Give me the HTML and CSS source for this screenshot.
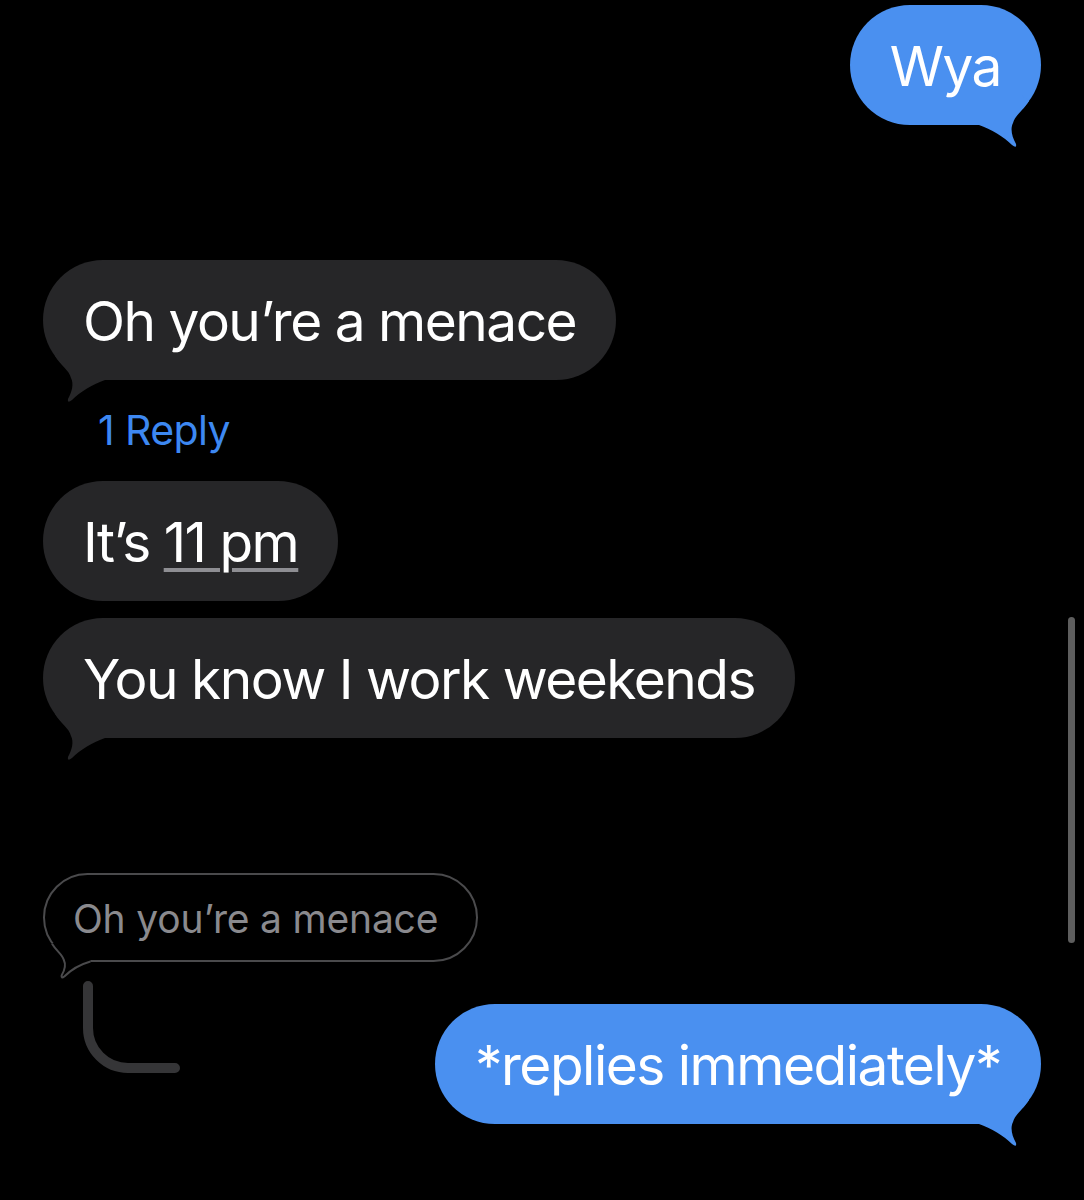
FILE: index.html
```html
<!DOCTYPE html>
<html lang="en">
<head>
<meta charset="utf-8">
<title>Messages</title>
<link rel="stylesheet" href="styles.css">
</head>
<body>
<div class="thread">
  <div class="row row-right">
    <div class="bubble sent"><span class="text">Wya</span><svg class="tail tail-right" viewBox="0 0 70 65"><path d="M0 10 L50 10 L58 16 C52 26 44 30 42 38 C39 44 41 52 45 59 Q46 64 41 60 C33 52 20 44 8 40 L0 40 Z"/></svg></div>
  </div>

  <div class="row row-left gap-xl">
    <div class="bubble recv"><span class="text">Oh you’re a menace</span><svg class="tail tail-left" viewBox="0 0 70 65"><path d="M0 10 L50 10 L58 16 C52 26 44 30 42 38 C39 44 41 52 45 59 Q46 64 41 60 C33 52 20 44 8 40 L0 40 Z"/></svg></div>
  </div>

  <div class="reply-count">1 Reply</div>

  <div class="row row-left">
    <div class="bubble recv"><span class="text">It’s <span class="detected">11 pm</span></span></div>
  </div>

  <div class="row row-left gap-sm">
    <div class="bubble recv"><span class="text">You know I work weekends</span><svg class="tail tail-left" viewBox="0 0 70 65"><path d="M0 10 L50 10 L58 16 C52 26 44 30 42 38 C39 44 41 52 45 59 Q46 64 41 60 C33 52 20 44 8 40 L0 40 Z"/></svg></div>
  </div>

  <div class="row row-left gap-xl">
    <div class="quoted"><span class="text">Oh you’re a menace</span><svg class="qtail" viewBox="0 0 70 65"><path class="qfill" d="M6 28 L50 10 L58 16 C52 26 44 30 42 38 C39 44 41 52 45 59 Q46 64 41 60 C33 52 20 44 6 40 Z"/><path class="qstroke" d="M58 16 C52 26 44 30 42 38 C39 44 41 52 45 59 Q46 64 41 60 C33 52 20 44 6 40"/></svg></div>
  </div>

  <div class="row row-split">
    <svg class="connector" viewBox="0 0 140 100"><path d="M45 10 V52 A40 40 0 0 0 85 92 H132"/></svg>
    <div class="bubble sent late"><span class="text">*replies immediately*</span><svg class="tail tail-right" viewBox="0 0 70 65"><path d="M0 10 L50 10 L58 16 C52 26 44 30 42 38 C39 44 41 52 45 59 Q46 64 41 60 C33 52 20 44 8 40 L0 40 Z"/></svg></div>
  </div>
</div>
<div class="scrollbar"></div>
</body>
</html>
```

FILE: styles.css
```css
html, body {
  margin: 0;
  padding: 0;
  background: #000;
}

body {
  width: 1084px;
  height: 1200px;
  overflow: hidden;
  position: relative;
  font-family: "Inter", "Noto Sans", sans-serif;
  color: #fff;
}

.thread {
  display: flex;
  flex-direction: column;
  padding: 5px 43px 0 43px;
}

.row {
  display: flex;
}

.row-right {
  justify-content: flex-end;
}

.row-left {
  justify-content: flex-start;
}

.row-split {
  justify-content: space-between;
  align-items: flex-start;
  margin-top: 14px;
}

.gap-xl {
  margin-top: 135px;
}

.gap-sm {
  margin-top: 17px;
}

.text {
  white-space: pre;
}

.bubble {
  position: relative;
  height: 120px;
  display: flex;
  align-items: center;
  padding: 2px 40px 0 40px;
  box-sizing: border-box;
  border-radius: 60px;
  font-size: 55px;
  line-height: 1;
  letter-spacing: -1.5px;
  white-space: nowrap;
}

.sent {
  background: #4a90f0;
}

.recv {
  background: #262628;
}

.late {
  margin-top: 28px;
}

.tail {
  position: absolute;
  bottom: -25px;
  width: 70px;
  height: 65px;
}

.sent .tail path {
  fill: #4a90f0;
}

.recv .tail path {
  fill: #262628;
}

.tail-right {
  right: 0;
}

.tail-left {
  left: 0;
  transform: scaleX(-1);
}

.detected {
  text-decoration: underline;
  text-decoration-color: #8e8e93;
  text-decoration-thickness: 4px;
  text-underline-offset: 6px;
}

.reply-count {
  height: 101px;
  display: flex;
  align-items: center;
  padding-left: 55px;
  font-size: 41px;
  line-height: 1;
  letter-spacing: -0.6px;
  color: #3d88f2;
}

.quoted {
  position: relative;
  height: 89px;
  box-sizing: border-box;
  display: flex;
  align-items: center;
  padding: 1px 38px 0 28px;
  border: 2px solid #4a4a4c;
  border-radius: 45px;
  font-size: 39px;
  line-height: 1;
  letter-spacing: -0.2px;
  color: #8a8a8e;
  white-space: nowrap;
}

.qtail {
  position: absolute;
  left: -2px;
  bottom: -20px;
  width: 52px;
  height: 48px;
  transform: scaleX(-1);
}

.qfill {
  fill: #000;
}

.qstroke {
  fill: none;
  stroke: #4a4a4c;
  stroke-width: 2.7;
}

.connector {
  width: 140px;
  height: 100px;
  flex: none;
}

.connector path {
  fill: none;
  stroke: #353537;
  stroke-width: 10;
  stroke-linecap: round;
}

.scrollbar {
  position: absolute;
  left: 1068px;
  top: 617px;
  width: 7px;
  height: 326px;
  border-radius: 4px;
  background: #5e5e5e;
}
```
